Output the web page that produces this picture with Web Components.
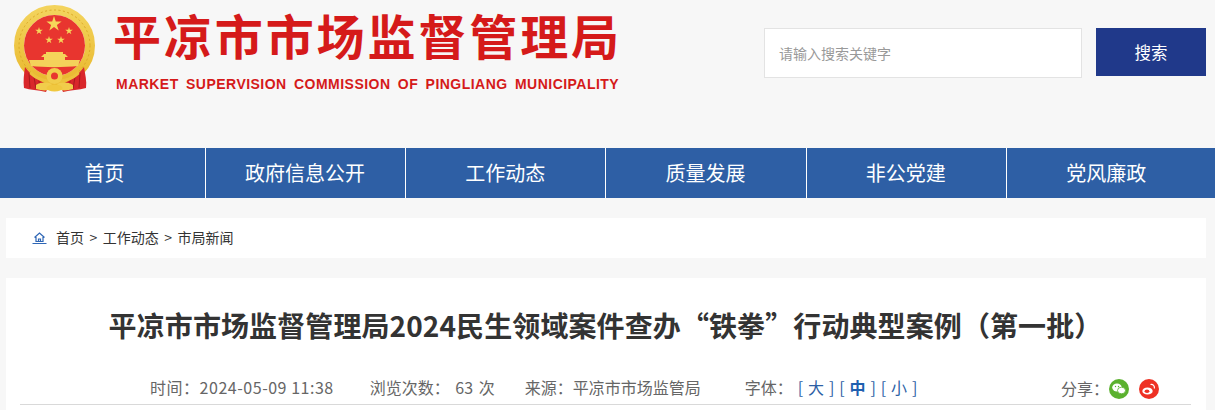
<!DOCTYPE html>
<html lang="zh"><head><meta charset="utf-8"><title>平凉市市场监督管理局</title>
<style>
html,body{margin:0;padding:0;background:#f7f7f7;overflow:hidden;height:410px}
body{font-family:"Noto Sans CJK SC","Liberation Sans",sans-serif}
</style></head><body>
<site-header></site-header>
<main-nav>
<nav-item first>首页</nav-item><nav-item>政府信息公开</nav-item><nav-item>工作动态</nav-item><nav-item>质量发展</nav-item><nav-item>非公党建</nav-item><nav-item last>党风廉政</nav-item>
</main-nav>
<bread-crumb></bread-crumb>
<article-head></article-head>
<script>
function def(name,html){customElements.define(name,class extends HTMLElement{constructor(){super();this.attachShadow({mode:'open'}).innerHTML=html;}});}
const star=(cx,cy,r)=>{let p=[];for(let i=0;i<10;i++){const a=-Math.PI/2+i*Math.PI/5,q=i%2?r*.38:r;p.push((cx+q*Math.cos(a)).toFixed(1)+','+(cy+q*Math.sin(a)).toFixed(1));}return `<polygon points="${p.join(' ')}" fill="#f6d65a"/>`;};
const emblem=`<svg width="84" height="92" viewBox="0 0 84 92" aria-hidden="true">
<defs><linearGradient id="g" x1="0" y1="0" x2="0" y2="1"><stop offset="0" stop-color="#f3d35c"/><stop offset="1" stop-color="#e9b92f"/></linearGradient></defs>
<circle cx="41.500" cy="40.500" r="35.500" fill="none" stroke="url(#g)" stroke-width="10"/>
<circle cx="41.500" cy="40.500" r="35.500" fill="none" stroke="#dba826" stroke-width="1" stroke-dasharray="2 2.500"/>
<circle cx="41.500" cy="40.500" r="30.500" fill="#e8352f"/>
<path d="M12 62C18 70 26 76 36 80L33 87C25 85 17 85 11 83 10 76 11 69 12 62Z" fill="#d9272b"/>
<path d="M71 62C65 70 57 76 47 80L50 87C58 85 66 85 73 83 74 76 72 69 71 62Z" fill="#d9272b"/>
<path d="M16 68l1 15M21 72l2 12M26 76l1 9M67 68l-1 15M62 72l-2 12M57 76l-1 9" stroke="#a81a1e" stroke-width="1" fill="none"/>
${star(41,19,8)}${star(26,26,4)}${star(56,26,4)}${star(36,35,4)}${star(48,35,4)}
<path d="M33 47h17v2h2l3 3h-3v3H31v-3h-3l3-3h2z" fill="#f5d35a"/>
<path d="M16 55h51l-2 6c-14 1.500-34 1.500-47 0z" fill="#f4d25a"/>
<path d="M18 66c6 6 14 9 23.500 9S59 72 65 66l1.500 3c-6 6-15 9-25 9s-19-3-25-9z" fill="#edc23c"/>
<circle cx="41.500" cy="71" r="8" fill="#f1cd4b"/><circle cx="41.500" cy="71" r="3.500" fill="#e8352f"/>
<path d="M23 80c5-3 11-3 16-1l-4 6c-4 1-8 0-12-1zM60 80c-5-3-11-3-16-1l4 6c4 1 8 0 12-1z" fill="#f1cd4b"/>
<ellipse cx="41.500" cy="83" rx="8" ry="3.500" fill="#f0c83f"/>
</svg>`;
def('site-header',`<style>
:host{display:flex;height:148px;box-sizing:border-box;background:#f7f7f7;padding:3px 9px 0 13px;justify-content:space-between;align-items:flex-start}
.brand{display:flex;gap:17px}
svg{display:block;margin-top:2px}
.cn{font:700 48px/1 "Noto Sans CJK SC",sans-serif;letter-spacing:2.900px;color:#d51a1a;white-space:nowrap;margin-top:7px;margin-left:-1px;height:58px}
.en{font:700 14px/1 "Liberation Sans",sans-serif;letter-spacing:.47px;word-spacing:3px;color:#d51a1a;white-space:nowrap;margin-top:9px;margin-left:2px}
.search{display:flex;gap:14px;margin-top:25px}
.box{width:318px;height:50px;box-sizing:border-box;background:#fff;border:1px solid #e3e3e3;padding-left:14px;font:14px/48px "Noto Sans CJK SC",sans-serif;color:#999}
.btn{width:110px;height:48px;background:#20398a;color:#fff;font:16.500px/48px "Noto Sans CJK SC",sans-serif;text-align:center}
</style><div class="brand">${emblem}<div><div class="cn">平凉市市场监督管理局</div><div class="en">MARKET SUPERVISION COMMISSION OF PINGLIANG MUNICIPALITY</div></div></div>
<div class="search"><div class="box">请输入搜索关键字</div><div class="btn">搜索</div></div>`);
def('main-nav',`<style>:host{display:flex;height:50px;background:#2e5fa5}</style><slot></slot>`);
def('nav-item',`<style>:host{display:block;box-sizing:border-box;flex:0 0 200.200px;height:50px;border-right:1px solid #fff;color:#fff;text-align:center;font:20px/50px "Noto Sans CJK SC",sans-serif;white-space:nowrap;padding-right:1px}:host([first]){flex-basis:206px;padding:0 0 0 4px}:host([last]){border-right:0;flex:0 0 200px}</style><slot></slot>`);
def('bread-crumb',`<style>:host{display:flex;align-items:center;height:40px;margin:20px 9px 0 6px;background:#fff;padding-left:26px;font:14px/38px "Noto Sans CJK SC",sans-serif;color:#333;gap:9px}svg{display:block}span{white-space:nowrap;display:flex;gap:5.500px;padding-bottom:2px}i{font-style:normal}</style>
<svg width="15" height="12" viewBox="0 0 15 12" fill="none" stroke="#2e66b5" stroke-width="1.200"><path d="M2.500 5.500 7.500 1l5 4.500M4 5v4.500h7V5M6.500 9.500V7h2v2.500M.5 11.500h14"/></svg>
<span><i>首页</i><i>&gt;</i><i>工作动态</i><i>&gt;</i><i>市局新闻</i></span>`);
def('article-head',`<style>
:host{display:block;margin:20px 9px 0 6px;background:#fff;height:132px;box-sizing:border-box;padding:0 15px 0 14px}
h1{margin:0;padding-top:25px;font:700 28px/44px "Noto Sans CJK SC",sans-serif;letter-spacing:.1px;color:#333;text-align:center;white-space:nowrap;height:44px}
.meta{display:flex;margin-top:24px;height:34px;border-bottom:1px solid #d9d9d9;box-sizing:border-box;font:16px/32px "Noto Sans CJK SC",sans-serif;color:#666;padding-left:130px;white-space:nowrap}
.t{letter-spacing:.53px;margin-right:36px}.v{margin-right:30px;word-spacing:2px}.s{margin-right:44px}
.blue{color:#2e5fa5;margin-left:5px;word-spacing:1.300px}.blue b{color:#1f5fb0;font-weight:700}
.share{margin-left:auto;display:flex;align-items:center;margin-right:32px}
.icons{display:flex;gap:10px;margin-top:3px}
svg{display:block}
</style>
<h1>平凉市市场监督管理局2024民生领域案件查办“铁拳”行动典型案例（第一批）</h1>
<div class="meta"><span class="t">时间：2024-05-09 11:38</span><span class="v">浏览次数： 63 次</span><span class="s">来源：平凉市市场监管局</span><span>字体：<span class="blue">[ 大 ] [ <b>中</b> ] [ 小 ]</span></span>
<div class="share"><span>分享：</span><div class="icons">
<svg width="20" height="20" viewBox="0 0 20 20"><circle cx="10" cy="10" r="10" fill="#5bb12f"/><ellipse cx="8" cy="8.500" rx="4.800" ry="4" fill="#fff"/><ellipse cx="12.500" cy="11.500" rx="4" ry="3.300" fill="#fff" stroke="#5bb12f" stroke-width=".8"/><circle cx="6.500" cy="7.500" r=".7" fill="#5bb12f"/><circle cx="9.500" cy="7.500" r=".7" fill="#5bb12f"/></svg>
<svg width="20" height="20" viewBox="0 0 20 20"><circle cx="10" cy="10" r="10" fill="#ee3124"/><ellipse cx="8.500" cy="12" rx="5.200" ry="3.600" fill="#fff"/><ellipse cx="8" cy="12.300" rx="2.400" ry="1.800" fill="#ee3124"/><path d="M11.500 5.500c2.500-.5 4.500 1.500 3.800 4" fill="none" stroke="#fff" stroke-width="1.200"/></svg>
</div></div></div>`);
</script></body></html>
